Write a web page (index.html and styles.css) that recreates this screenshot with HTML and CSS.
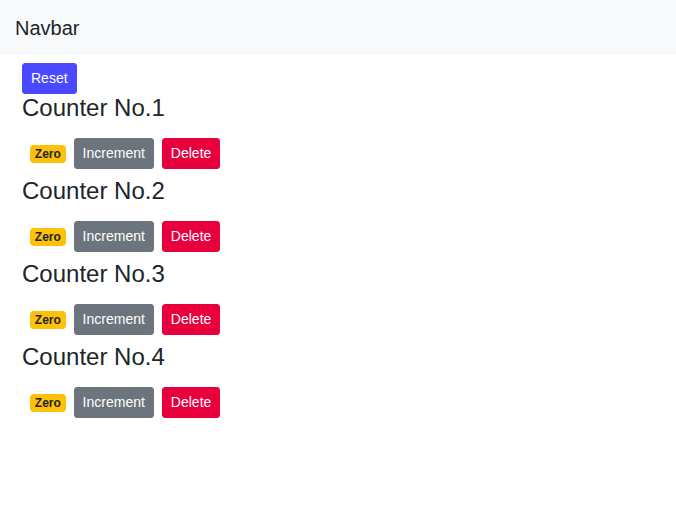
FILE: index.html
```html
<!DOCTYPE html>
<html lang="en">
<head>
<meta charset="utf-8">
<title>Counters</title>
<link rel="stylesheet" href="styles.css">
</head>
<body>
<nav class="navbar"><a class="brand" href="#">Navbar</a></nav>
<main class="main">
<div class="reset-line"><button class="btn btn-sm btn-primary reset">Reset</button></div>
<div class="counter"><h4 class="title">Counter No.1</h4><div class="row"><span class="badge badge-warning m-2">Zero</span><button class="btn btn-sm btn-secondary">Increment</button><button class="btn btn-sm btn-danger m-2">Delete</button></div></div>
<div class="counter"><h4 class="title">Counter No.2</h4><div class="row"><span class="badge badge-warning m-2">Zero</span><button class="btn btn-sm btn-secondary">Increment</button><button class="btn btn-sm btn-danger m-2">Delete</button></div></div>
<div class="counter"><h4 class="title">Counter No.3</h4><div class="row"><span class="badge badge-warning m-2">Zero</span><button class="btn btn-sm btn-secondary">Increment</button><button class="btn btn-sm btn-danger m-2">Delete</button></div></div>
<div class="counter"><h4 class="title">Counter No.4</h4><div class="row"><span class="badge badge-warning m-2">Zero</span><button class="btn btn-sm btn-secondary">Increment</button><button class="btn btn-sm btn-danger m-2">Delete</button></div></div>
</main>
</body>
</html>
```
FILE: styles.css
```css
* { box-sizing: border-box; }
body {
  margin: 0;
  font-family: "Liberation Sans", Arial, sans-serif;
  font-size: 16px;
  line-height: 1.5;
  color: #212529;
  background: #fff;
}
.navbar {
  background: #f8f9fa;
  height: 55px;
  padding: 0 15px;
  display: flex;
  align-items: center;
}
.brand {
  font-size: 20px;
  color: #212529;
  text-decoration: none;
  line-height: 30px;
}
.main { padding: 0 22px; }
.reset-line { height: 39px; }
.reset { margin-top: 8px; }
.m-2 { margin: 8px; }
.btn {
  display: inline-block;
  font-family: inherit;
  font-weight: 400;
  color: #fff;
  text-align: center;
  vertical-align: middle;
  border: 1px solid transparent;
  cursor: pointer;
}
.btn-sm {
  padding: 4px 8px;
  font-size: 14px;
  line-height: 1.5;
  border-radius: 3px;
}
.btn-primary { background: #4b49ff; border-color: #4b49ff; }
.btn-secondary { background: #6c757d; border-color: #6c757d; }
.btn-danger { background: #e8003d; border-color: #e8003d; }
.title {
  margin: 0 0 8px;
  font-size: 24px;
  font-weight: 500;
  line-height: 28px;
}
.row { display: flex; align-items: center; }
.badge {
  display: inline-block;
  padding: 3px 4.8px;
  font-size: 12px;
  font-weight: 700;
  line-height: 1;
  border-radius: 4px;
}
.badge-warning { background: #ffc107; color: #212529; }
```
